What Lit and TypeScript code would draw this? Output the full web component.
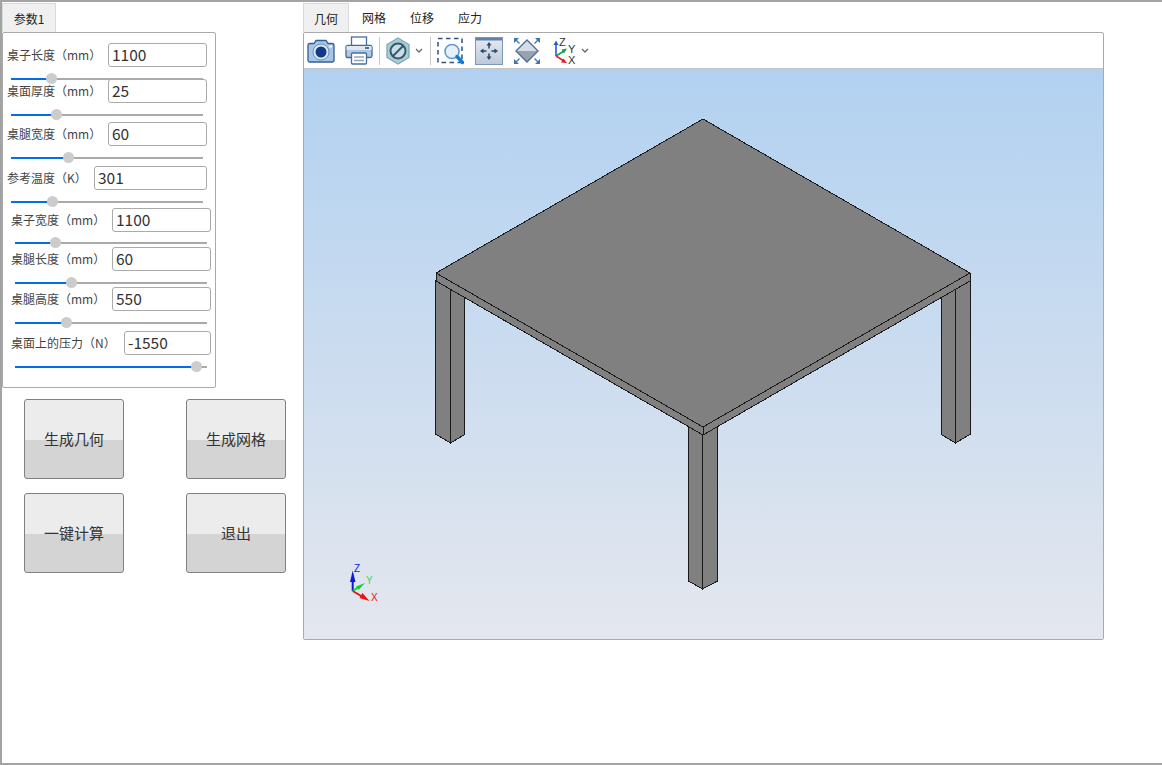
import { LitElement, html, css, svg, unsafeCSS } from 'lit';
import { customElement } from 'lit/decorators.js';

const CJK = unsafeCSS(`"Noto Sans CJK SC", "Noto Sans", sans-serif`);

// gap = space above the field, taken from the slider line of the row before
const fields = [
  { label: '桌子长度（mm）', value: '1100', at: 40, gap: 10, input: 99, shift: 0, drop: 12 },
  { label: '桌面厚度（mm）', value: '25', at: 45, gap: 0, input: 99, shift: 0, drop: 12 },
  { label: '桌腿宽度（mm）', value: '60', at: 57, gap: 7, input: 99, shift: 0, drop: 12 },
  { label: '参考温度（K）', value: '301', at: 41, gap: 8, input: 113, shift: 0, drop: 12 },
  { label: '桌子宽度（mm）', value: '1100', at: 40, gap: 6, input: 99, shift: 4, drop: 11 },
  { label: '桌腿长度（mm）', value: '60', at: 56, gap: 4, input: 99, shift: 4, drop: 12 },
  { label: '桌腿高度（mm）', value: '550', at: 51, gap: 4, input: 99, shift: 4, drop: 12 },
  { label: '桌面上的压力（N）', value: '-1550', at: 181, gap: 8, input: 87, shift: 4, drop: 12 },
];

const chevron = html`<svg class="chev" width="8" height="5" viewBox="0 0 8 5"><path d="M1 1l3 3 3-3" fill="none" stroke="#5b6b7d" stroke-width="1.3"/></svg>`;

const camera = html`<svg width="28" height="24" viewBox="0 0 28 24">
  <path d="M1 6.5Q1 4.5 3 4.5H7L9 1.5H19L21 4.5H25Q27 4.5 27 6.5V21Q27 23 25 23H3Q1 23 1 21Z" fill="#a9c4e4" stroke="#2f5f95" stroke-width="1.3"/>
  <circle cx="14" cy="13" r="8" fill="#dbe7f5" stroke="#6a90bd"/>
  <circle cx="14" cy="13" r="5.5" fill="#123a85"/>
  <rect x="22" y="6.5" width="3" height="2" fill="#eef4fb"/>
</svg>`;

const printer = html`<svg width="28" height="29" viewBox="0 0 28 29">
  <rect x="6.5" y="1" width="15" height="9" fill="#fff" stroke="#456f9f" stroke-width="1.3"/>
  <path d="M3 9.5H25Q27 9.5 27 11.5V20Q27 21.5 25 21.5H3Q1 21.5 1 20V11.5Q1 9.5 3 9.5Z" fill="#b4c8df" stroke="#3f6a9b" stroke-width="1.3"/>
  <rect x="1.5" y="10" width="25" height="4" fill="#dfe8f2"/>
  <rect x="20" y="11" width="4" height="2" fill="#4a6f98"/>
  <rect x="6.5" y="17" width="15" height="11" rx="1" fill="#fff" stroke="#456f9f" stroke-width="1.3"/>
  <path d="M9 21H19M9 24.5H19" stroke="#8da6c2" stroke-width="1.3"/>
</svg>`;

const noSign = html`<svg width="24" height="28" viewBox="0 0 24 28">
  <path d="M12 1L23 7.5V20.5L12 27L1 20.5V7.5Z" fill="#a9cdd6" stroke="#7fa8b5" stroke-width="1.3"/>
  <circle cx="12" cy="14" r="7.5" fill="#c9dee4" stroke="#37596e" stroke-width="2"/>
  <path d="M7 19L17 9" stroke="#37596e" stroke-width="2"/>
</svg>`;

const zoomBox = html`<svg width="27" height="28" viewBox="0 0 27 28">
  <rect x="1" y="1.5" width="24" height="24" fill="none" stroke="#32527c" stroke-width="1.5" stroke-dasharray="4.5 3.5"/>
  <circle cx="15" cy="14.5" r="7" fill="#e6f1fb" stroke="#5d9bd5" stroke-width="1.6"/>
  <path d="M20 19.5L25.5 25.5" stroke="#0d7ad6" stroke-width="3.4" stroke-linecap="round"/>
</svg>`;

const fit = html`<svg width="28" height="28" viewBox="0 0 28 28">
  <defs><linearGradient id="fitbg" x1="0" y1="0" x2="0" y2="1"><stop offset="0" stop-color="#e6ebf3"/><stop offset="1" stop-color="#bcc9da"/></linearGradient></defs>
  <rect x="0.5" y="0.5" width="27" height="27" fill="url(#fitbg)" stroke="#7e97b8"/>
  <rect x="1" y="1" width="26" height="2.5" fill="#5f82ab"/>
  <path d="M14 8V11.5M14 16.5V20M8 14H11.5M16.5 14H20" stroke="#26486f" stroke-width="1.5"/>
  <path d="M14 5L11.5 8.5H16.5ZM14 23L11.5 19.5H16.5ZM5 14L8.5 11.5V16.5ZM23 14L19.5 11.5V16.5Z" fill="#26486f"/>
</svg>`;

const fitAll = html`<svg width="28" height="28" viewBox="0 0 28 28">
  <path d="M14 3L25 14H3Z" fill="#d6dde6"/>
  <path d="M3 14H25L14 25Z" fill="#98a3b0"/>
  <path d="M14 3L25 14L14 25L3 14Z" fill="none" stroke="#4f6f95" stroke-width="1.4"/>
  <path d="M1 1H6L1 6ZM27 1H22L27 6ZM1 27H6L1 22ZM27 27H22L27 22Z" fill="#3f76ad"/>
  <path d="M2 2L6.5 6.5M26 2L21.5 6.5M2 26L6.5 21.5M26 26L21.5 21.5" stroke="#3f76ad" stroke-width="1.3"/>
</svg>`;

const triad = html`<svg width="26" height="30" viewBox="0 0 26 30">
  <path d="M3 20V8" stroke="#1d5fd0" stroke-width="1.6"/>
  <path d="M3 4.5L0.5 9H5.5Z" fill="#1d5fd0"/>
  <path d="M3 20L11 15" stroke="#17a04a" stroke-width="1.6"/>
  <path d="M14 12.5L8.5 13.5L11 17.5Z" fill="#17a04a"/>
  <path d="M3 20L11 25" stroke="#e0202a" stroke-width="1.6"/>
  <path d="M14 27L8 26.5L10.5 22.5Z" fill="#e0202a"/>
  <text x="6" y="10" class="tri">Z</text>
  <text x="15" y="17" class="tri">Y</text>
  <text x="15" y="28" class="tri">X</text>
</svg>`;

const leg = (x0: number, x1: number, x2: number, top0: number, top1: number, top2: number, b0: number, b1: number, b2: number) => svg`
  <path d="M${x0} ${top0}L${x1} ${top1}L${x1} ${b1}L${x0} ${b0}Z M${x1} ${top1}L${x2} ${top2}L${x2} ${b2}L${x1} ${b1}Z" fill="#808080" stroke="#1a1a1a" stroke-linejoin="round"/>`;

@customElement('app-root')
export class AppRoot extends LitElement {
  static styles = css`
    :host {
      display: block;
      box-sizing: border-box;
      width: 1162px;
      height: 765px;
      border-top: 2px solid #a3a3a3;
      border-left: 2px solid #a3a3a3;
      border-bottom: 2px solid #a3a3a3;
      background: #fff;
      font-family: ${CJK};
      color: #333;
      overflow: hidden;
    }
    .page {
      display: flex;
      padding-top: 1px;
    }
    .side {
      width: 301px;
      flex: none;
    }
    .tab {
      box-sizing: border-box;
      height: 29px;
      display: flex;
      align-items: center;
      justify-content: center;
      font-size: 12px;
      color: #222;
    }
    .tab.on {
      background: #f0f0f0;
      border: 1px solid #d9d9d9;
      border-bottom: 0;
    }
    .side .tab {
      width: 54px;
    }
    .params {
      box-sizing: border-box;
      width: 214px;
      height: 356px;
      border: 1px solid #aaa;
      border-radius: 2px;
    }
    .field {
      display: flex;
      align-items: center;
      justify-content: space-between;
      height: 24px;
    }
    .name {
      font-size: 12px;
      color: #444;
      white-space: nowrap;
      padding: 0 0 2px 4px;
    }
    .value {
      box-sizing: border-box;
      height: 24px;
      border: 1px solid #aaa;
      border-radius: 3px;
      background: #fff;
      font-size: 15.5px;
      line-height: 20px;
      padding-left: 3px;
      color: #333;
    }
    .slider {
      position: relative;
      height: 2px;
      width: 192px;
      background: #aaa;
    }
    .fill {
      height: 2px;
      background: #0070e8;
    }
    .thumb {
      position: absolute;
      top: -5px;
      width: 11px;
      height: 11px;
      margin-left: -5px;
      border-radius: 50%;
      background: #ccc;
    }
    .actions {
      display: grid;
      grid-template-columns: 100px 100px;
      justify-content: space-between;
      row-gap: 14px;
      width: 262px;
      margin: 11px 0 0 22px;
    }
    .action {
      box-sizing: border-box;
      height: 80px;
      padding-bottom: 2px;
      border: 1px solid #808080;
      border-radius: 3px;
      background: linear-gradient(#ececec 0 51%, #d4d4d4 51% 100%);
      display: flex;
      align-items: center;
      justify-content: center;
      font-size: 15px;
      color: #333;
    }
    .main {
      width: 801px;
      flex: none;
    }
    .tabs {
      display: flex;
    }
    .tabs .tab {
      width: 48px;
    }
    .tabs .tab.on {
      width: 46px;
      margin-right: 1px;
    }
    .frame {
      box-sizing: border-box;
      height: 608px;
      border: 1px solid #aaa;
      border-radius: 2px;
      display: flex;
      flex-direction: column;
    }
    .toolbar {
      height: 35px;
      flex: none;
      display: flex;
      align-items: center;
      padding-left: 3px;
    }
    .toolbar svg {
      flex: none;
      display: block;
    }
    .s2 { margin-left: 2px; }
    .s5 { margin-left: 5px; }
    .s6 { margin-left: 6px; }
    .s7 { margin-left: 7px; }
    .s10 { margin-left: 10px; }
    .s11 { margin-left: 11px; }
    .s12 { margin-left: 12px; }
    .tri {
      font: 11px "Liberation Sans", sans-serif;
      fill: #333;
    }
    .sep {
      width: 1px;
      height: 28px;
      background: #c8c8c8;
      flex: none;
    }
    .view {
      flex: 1;
      position: relative;
      background: linear-gradient(#b2d1f1, #e4e7ee);
      border-top: 1px solid #c4c4c4;
    }
    .view svg {
      display: block;
      position: absolute;
      left: 0;
      top: 0;
    }
    .axis {
      font: 10px "Liberation Sans", sans-serif;
    }
  `;

  renderField(f: (typeof fields)[number]) {
    return html`
      <div class="field" style="margin-top:${f.gap}px;margin-left:${f.shift}px;margin-right:${8 - f.shift}px">
        <span class="name">${f.label}</span>
        <div class="value" style="width:${f.input}px">${f.value}</div>
      </div>
      <div class="slider" style="margin-top:${f.drop - 1}px;margin-left:${8 + f.shift}px;margin-bottom:-1px">
        <div class="fill" style="width:${f.at}px"></div>
        <div class="thumb" style="left:${f.at}px"></div>
      </div>
    `;
  }

  renderTable() {
    return svg`
      <svg width="799" height="570" viewBox="304 69 799 570" shape-rendering="crispEdges">
        ${leg(435.5, 450.5, 464.5, 280, 289, 297, 434, 443, 434.5)}
        ${leg(941.5, 955.5, 970.5, 297, 289, 280, 434.5, 443, 434)}
        ${leg(688.5, 702.5, 717.5, 426, 434, 426, 581, 589, 581)}
        <path d="M436 273L703 427V435L436 281Z M970 273L703 427V435L970 281Z" fill="#808080" stroke="#1a1a1a" stroke-linejoin="round"/>
        <path d="M703 119L970 273L703 427L436 273Z" fill="#808080" stroke="#1a1a1a" stroke-linejoin="round"/>
        <g shape-rendering="auto">
          <path d="M352.7 591V580" stroke="#0b18e0" stroke-width="2"/>
          <path d="M352.7 570.5L350 582H355.5Z" fill="#0b18e0"/>
          <path d="M352.7 591L358 587.5" stroke="#10d030" stroke-width="2"/>
          <path d="M365 583L356 586.5L358.5 590Z" fill="#10d030"/>
          <path d="M352.7 591L362 596.5" stroke="#f01010" stroke-width="2"/>
          <path d="M369.5 601L359.5 598L362.5 593Z" fill="#f01010"/>
          <text x="354" y="572" class="axis" fill="#0b18e0">Z</text>
          <text x="366" y="584" class="axis" fill="#40d858">Y</text>
          <text x="371" y="601" class="axis" fill="#f01010">X</text>
        </g>
      </svg>
    `;
  }

  render() {
    return html`
      <div class="page">
        <div class="side">
          <div class="tab on">参数1</div>
          <div class="params">${fields.map((f) => this.renderField(f))}</div>
          <div class="actions">
            ${['生成几何', '生成网格', '一键计算', '退出'].map((t) => html`<div class="action">${t}</div>`)}
          </div>
        </div>
        <div class="main">
          <div class="tabs">
            <div class="tab on">几何</div>
            <div class="tab">网格</div>
            <div class="tab">位移</div>
            <div class="tab">应力</div>
          </div>
          <div class="frame">
            <div class="toolbar">
              ${camera}
              <span class="s10"></span>
              ${printer}
              <span class="s6"></span>
              <div class="sep"></div>
              <span class="s6"></span>
              ${noSign}
              <span class="s5"></span>
              ${chevron}
              <span class="s7"></span>
              <div class="sep"></div>
              <span class="s6"></span>
              ${zoomBox}
              <span class="s11"></span>
              ${fit}
              <span class="s10"></span>
              ${fitAll}
              <span class="s12"></span>
              ${triad}
              <span class="s2"></span>
              ${chevron}
            </div>
            <div class="view">${this.renderTable()}</div>
          </div>
        </div>
      </div>
    `;
  }
}
